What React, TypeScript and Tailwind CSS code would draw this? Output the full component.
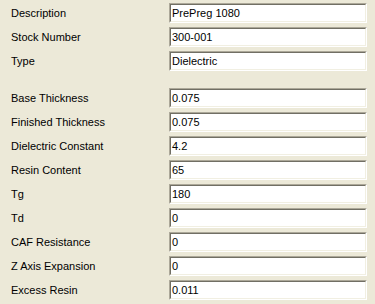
import React from "react";

const rows1 = [
  ["Description", "PrePreg 1080"],
  ["Stock Number", "300-001"],
  ["Type", "Dielectric"],
];
const rows2 = [
  ["Base Thickness", "0.075"],
  ["Finished Thickness", "0.075"],
  ["Dielectric Constant", "4.2"],
  ["Resin Content", "65"],
  ["Tg", "180"],
  ["Td", "0"],
  ["CAF Resistance", "0"],
  ["Z Axis Expansion", "0"],
  ["Excess Resin", "0.011"],
];

function Row({ label, value }: { label: string; value: string }) {
  return (
    <div className="flex items-center h-[20px] mb-[4px]">
      <div className="w-[158px] text-[11px] text-black leading-none">{label}</div>
      <div className="w-[198px] h-[20px] border-t border-l border-t-[#aca899] border-l-[#aca899] border-b border-r border-b-white border-r-white">
        <div className="h-full border-t border-l border-t-[#716f64] border-l-[#716f64] border-b border-r border-b-[#f1efe2] border-r-[#f1efe2] bg-white flex items-center pl-[1px] text-[11px] text-black leading-none">
          {value}
        </div>
      </div>
    </div>
  );
}

export default function App() {
  return (
    <div
      className="w-[375px] h-[304px] bg-[#ece9d8] pl-[11px] pt-[3px] overflow-hidden"
      style={{ fontFamily: '"Liberation Sans", Arial, sans-serif' }}
    >
      {rows1.map(([l, v]) => (
        <Row key={l} label={l} value={v} />
      ))}
      <div className="h-[13px]" />
      {rows2.map(([l, v]) => (
        <Row key={l} label={l} value={v} />
      ))}
    </div>
  );
}
